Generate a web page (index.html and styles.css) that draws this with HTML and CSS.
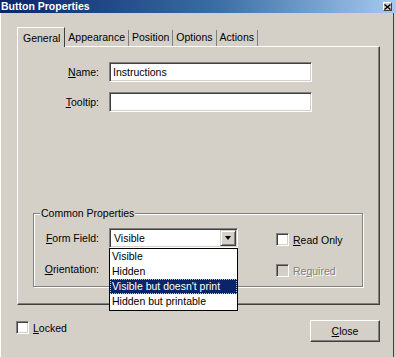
FILE: index.html
```html
<!DOCTYPE html>
<html>
<head>
<meta charset="utf-8">
<link rel="stylesheet" href="styles.css">
</head>
<body>
<div class="titlebar">
  <span class="title">Button Properties</span>
  <span class="tb-close"><svg width="7" height="6" viewBox="0 0 7 6"><path d="M0.5 0.5 L6.5 5.5 M6.5 0.5 L0.5 5.5" stroke="#000" stroke-width="1.4"/></svg></span>
</div>
<div class="window">
  <div class="tabs">
    <div class="tab active">General</div>
    <div class="tab">Appearance</div>
    <div class="tab">Position</div>
    <div class="tab">Options</div>
    <div class="tab">Actions</div>
  </div>
  <div class="panel">
    <div class="row">
      <span class="lbl"><u>N</u>ame:</span>
      <div class="textbox">Instructions</div>
    </div>
    <div class="row row-gap">
      <span class="lbl"><u>T</u>ooltip:</span>
      <div class="textbox"></div>
    </div>
    <div class="group">
      <div class="legend">Common Properties</div>
      <div class="grow first">
        <span class="glbl"><u>F</u>orm Field:</span>
        <div class="select">
          <span class="sel-text">Visible</span>
          <span class="sel-btn"><span class="tri"></span></span>
          <div class="dropdown">
            <div class="opt">Visible</div>
            <div class="opt">Hidden</div>
            <div class="opt selected">Visible but doesn't print</div>
            <div class="opt">Hidden but printable</div>
          </div>
        </div>
        <span class="check"><span class="box"></span><span><u>R</u>ead Only</span></span>
      </div>
      <div class="grow second">
        <span class="glbl"><u>O</u>rientation:</span>
        <div class="select">
          <span class="sel-text"></span>
          <span class="sel-btn"><span class="tri"></span></span>
        </div>
        <span class="check disabled"><span class="box"></span><span>Re<u>q</u>uired</span></span>
      </div>
    </div>
  </div>
  <div class="footer">
    <span class="check locked"><span class="box"></span><span><u>L</u>ocked</span></span>
    <div class="button"><u>C</u>lose</div>
  </div>
</div>
</body>
</html>
```
FILE: styles.css
```css
* { box-sizing: border-box; }
html, body { margin: 0; padding: 0; background: #d4d0c8; }
body {
  width: 396px;
  height: 357px;
  overflow: hidden;
  font-family: "Liberation Sans", Arial, sans-serif;
  font-size: 10.5px;
  color: #000;
}
.titlebar {
  height: 13px;
  display: flex;
  align-items: center;
  justify-content: space-between;
  background: linear-gradient(to right, #0a246a 0%, #3a6ea5 55%, #a6caf0 100%);
  padding: 0 4px 0 1px;
}
.title { color: #fff; font-weight: bold; font-size: 10.5px; line-height: 13px; }
.tb-close {
  width: 9px; height: 9px;
  background: #d4d0c8;
  border: 1px solid; border-color: #fff #404040 #404040 #fff;
  display: flex; align-items: center; justify-content: center;
}
.tb-close svg { display: block; }
.window {
  width: 394px;
  height: 344px;
  border-left: 1px solid #fff;
  border-right: 1px solid #404040;
  padding: 14px 0 0 16px;
}
.tabs { display: flex; align-items: flex-end; height: 19px; }
.tab {
  height: 16px;
  padding: 0 3px;
  line-height: 15px;
  border-right: 1px solid #808080;
}
.tab.active {
  height: 20px;
  margin-bottom: -1px;
  padding: 3px 4px 0 5px;
  border-top: 1px solid #fff;
  border-left: 1px solid #fff;
  border-right: 1px solid #404040;
  background: #d4d0c8;
  position: relative;
  z-index: 1;
}
.panel {
  width: 363px;
  height: 259px;
  border-top: 1px solid #fff;
  border-left: 1px solid #fff;
  border-right: 1px solid #404040;
  border-bottom: 1px solid #404040;
  box-shadow: inset -1px -1px #808080;
  padding-top: 15px;
  display: flex;
  flex-direction: column;
}
.row { display: flex; align-items: center; height: 20px; }
.row-gap { margin-top: 10px; }
.lbl { width: 81px; margin-right: 10px; text-align: right; }
.textbox, .select {
  height: 20px;
  background: #fff;
  border: 1px solid;
  border-color: #808080 #fff #fff #808080;
  box-shadow: inset 1px 1px #404040, inset -1px -1px #d4d0c8;
  padding: 0 3px;
  line-height: 18px;
}
.textbox { width: 203px; }
.group {
  margin: 101px 0 0 15px;
  width: 330px;
  height: 74px;
  border: 1px solid #808080;
  box-shadow: inset 1px 1px #fff, 1px 1px #fff;
  display: flex;
  flex-direction: column;
}
.legend {
  align-self: flex-start;
  margin: -7px 0 0 6px;
  padding: 0 1px;
  line-height: 13px;
  background: #d4d0c8;
}
.grow { display: flex; align-items: center; height: 20px; }
.grow.first { margin-top: 8px; }
.grow.second { margin-top: 11px; }
.glbl { width: 65px; margin-right: 10px; text-align: right; }
.select {
  width: 129px;
  display: flex;
  align-items: center;
  justify-content: space-between;
  padding: 0 1px 0 4px;
  position: relative;
}
.sel-btn {
  width: 16px; height: 16px;
  background: #d4d0c8;
  border: 1px solid; border-color: #d4d0c8 #404040 #404040 #d4d0c8;
  box-shadow: inset 1px 1px #fff, inset -1px -1px #808080;
  display: flex; align-items: center; justify-content: center;
}
.tri {
  width: 0; height: 0;
  border-left: 3.5px solid transparent;
  border-right: 3.5px solid transparent;
  border-top: 4px solid #000;
}
.dropdown {
  position: absolute;
  top: calc(100% + 1px);
  left: -1px;
  width: 129px;
  background: #fff;
  border: 1px solid #000;
  padding-bottom: 1px;
  z-index: 2;
}
.opt { height: 15px; line-height: 15px; padding-left: 2px; white-space: nowrap; }
.opt.selected {
  background: #0a246a;
  color: #fff;
  outline: 1px dotted #a6caf0;
  outline-offset: -1px;
}
.check { display: flex; align-items: center; gap: 4px; }
.grow .check { margin-left: 38px; margin-top: 3px; }
.box {
  width: 13px; height: 13px;
  background: #fff;
  border: 1px solid;
  border-color: #808080 #fff #fff #808080;
  box-shadow: inset 1px 1px #404040, inset -1px -1px #d4d0c8;
}
.check.disabled { color: #808080; text-shadow: 1px 1px #fff; }
.check.disabled .box { background: #d4d0c8; }
.footer {
  width: 363px;
  margin-top: 15px;
  display: flex;
  justify-content: space-between;
  align-items: flex-start;
}
.check.locked { margin: 1px 0 0 -1px; }
.button {
  width: 70px; height: 22px;
  border: 1px solid; border-color: #fff #404040 #404040 #fff;
  box-shadow: inset -1px -1px #808080;
  display: flex; align-items: center; justify-content: center;
}
```
